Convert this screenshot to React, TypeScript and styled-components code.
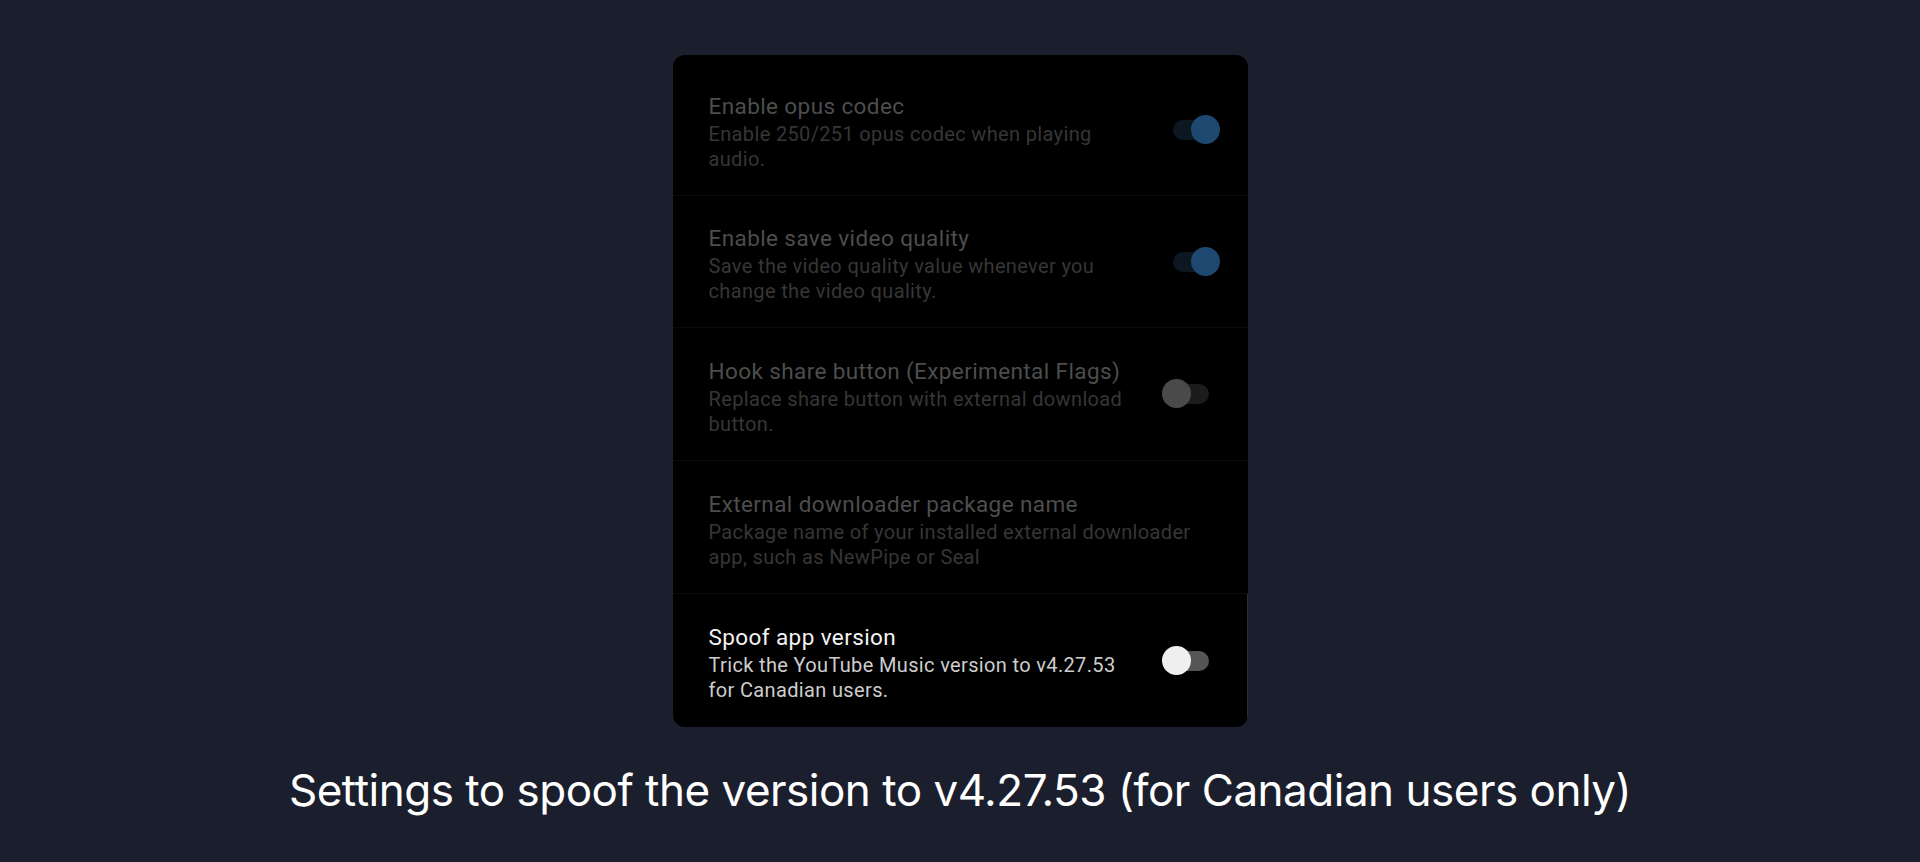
import React from "react";
import styled, { createGlobalStyle } from "styled-components";

const Global = createGlobalStyle`
  html, body { margin: 0; padding: 0; background: #1b1f2d; }
  body { font-family: Roboto, "Noto Sans", sans-serif; }
`;

const Page = styled.div`
  width: 1920px;
  height: 862px;
  background: #1b1f2d;
  display: flex;
  flex-direction: column;
  align-items: center;
  padding-top: 55px;
  box-sizing: border-box;
`;

const Panel = styled.div`
  width: 575px;
  background: #000;
  border-radius: 12px;
  padding-top: 9px;
  box-sizing: border-box;
  overflow: hidden;
`;

const Row = styled.div<{ $height: number; $last?: boolean }>`
  height: ${(p) => p.$height}px;
  display: flex;
  align-items: center;
  padding: 0 28px 0 36px;
  box-sizing: border-box;
  border-bottom: ${(p) => (p.$last ? "none" : "1px solid #0c0c0c")};
  border-right: ${(p) => (p.$last ? "1px solid #2b2e36" : "none")};
  gap: 26px;
`;

const TextBlock = styled.div<{ $wide?: boolean }>`
  flex: ${(p) => (p.$wide ? "0 0 505px" : "0 0 427px")};
  display: flex;
  flex-direction: column;
  padding-top: 3px;
`;

const Title = styled.div<{ $active?: boolean }>`
  font-size: 22.5px;
  letter-spacing: 0.4px;
  line-height: 32px;
  color: ${(p) => (p.$active ? "#f4f4f4" : "#4d4d4d")};
`;

const Desc = styled.div<{ $active?: boolean }>`
  font-size: 20px;
  letter-spacing: 0.35px;
  line-height: 25px;
  color: ${(p) => (p.$active ? "#cdcdcd" : "#363636")};
`;

const SwitchBox = styled.div`
  position: relative;
  width: 58px;
  height: 30px;
  flex: 0 0 58px;
`;

const Track = styled.div<{ $color: string }>`
  position: absolute;
  left: 11px;
  top: 5px;
  width: 36px;
  height: 20px;
  border-radius: 10px;
  background: ${(p) => p.$color};
`;

const Thumb = styled.div<{ $on?: boolean; $color: string }>`
  position: absolute;
  top: 0;
  left: ${(p) => (p.$on ? "29px" : "0px")};
  width: 29px;
  height: 29px;
  border-radius: 50%;
  background: ${(p) => p.$color};
`;

const Caption = styled.div`
  margin-top: 37px;
  font-family: Inter, "Noto Sans", sans-serif;
  font-size: 44px;
  line-height: 53px;
  color: #ffffff;
  letter-spacing: -0.5px;
`;

type Item = {
  title: string;
  desc: string;
  height: number;
  toggle?: "on" | "off";
  active?: boolean;
};

const items: Item[] = [
  {
    title: "Enable opus codec",
    desc: "Enable 250/251 opus codec when playing audio.",
    toggle: "on",
    height: 132,
  },
  {
    title: "Enable save video quality",
    desc: "Save the video quality value whenever you change the video quality.",
    toggle: "on",
    height: 132,
  },
  {
    title: "Hook share button (Experimental Flags)",
    desc: "Replace share button with external download button.",
    toggle: "off",
    height: 133,
  },
  {
    title: "External downloader package name",
    desc: "Package name of your installed external downloader app, such as NewPipe or Seal",
    height: 133,
  },
  {
    title: "Spoof app version",
    desc: "Trick the YouTube Music version to v4.27.53 for Canadian users.",
    toggle: "off",
    active: true,
    height: 133,
  },
];

function Switch({ on, active }: { on: boolean; active?: boolean }) {
  let track = "#1c1c1c";
  let thumb = "#4a4a4a";
  if (on) {
    track = "#0c1722";
    thumb = "#1d4870";
  }
  if (active) {
    track = "#555555";
    thumb = "#efefef";
  }
  return (
    <SwitchBox>
      <Track $color={track} />
      <Thumb $on={on} $color={thumb} />
    </SwitchBox>
  );
}

export default function App() {
  return (
    <>
      <Global />
      <Page>
        <Panel>
          {items.map((it, i) => (
            <Row key={i} $height={it.height} $last={i === items.length - 1}>
              <TextBlock $wide={!it.toggle}>
                <Title $active={it.active}>{it.title}</Title>
                <Desc $active={it.active}>{it.desc}</Desc>
              </TextBlock>
              {it.toggle && <Switch on={it.toggle === "on"} active={it.active} />}
            </Row>
          ))}
        </Panel>
        <Caption>Settings to spoof the version to v4.27.53 (for Canadian users only)</Caption>
      </Page>
    </>
  );
}
